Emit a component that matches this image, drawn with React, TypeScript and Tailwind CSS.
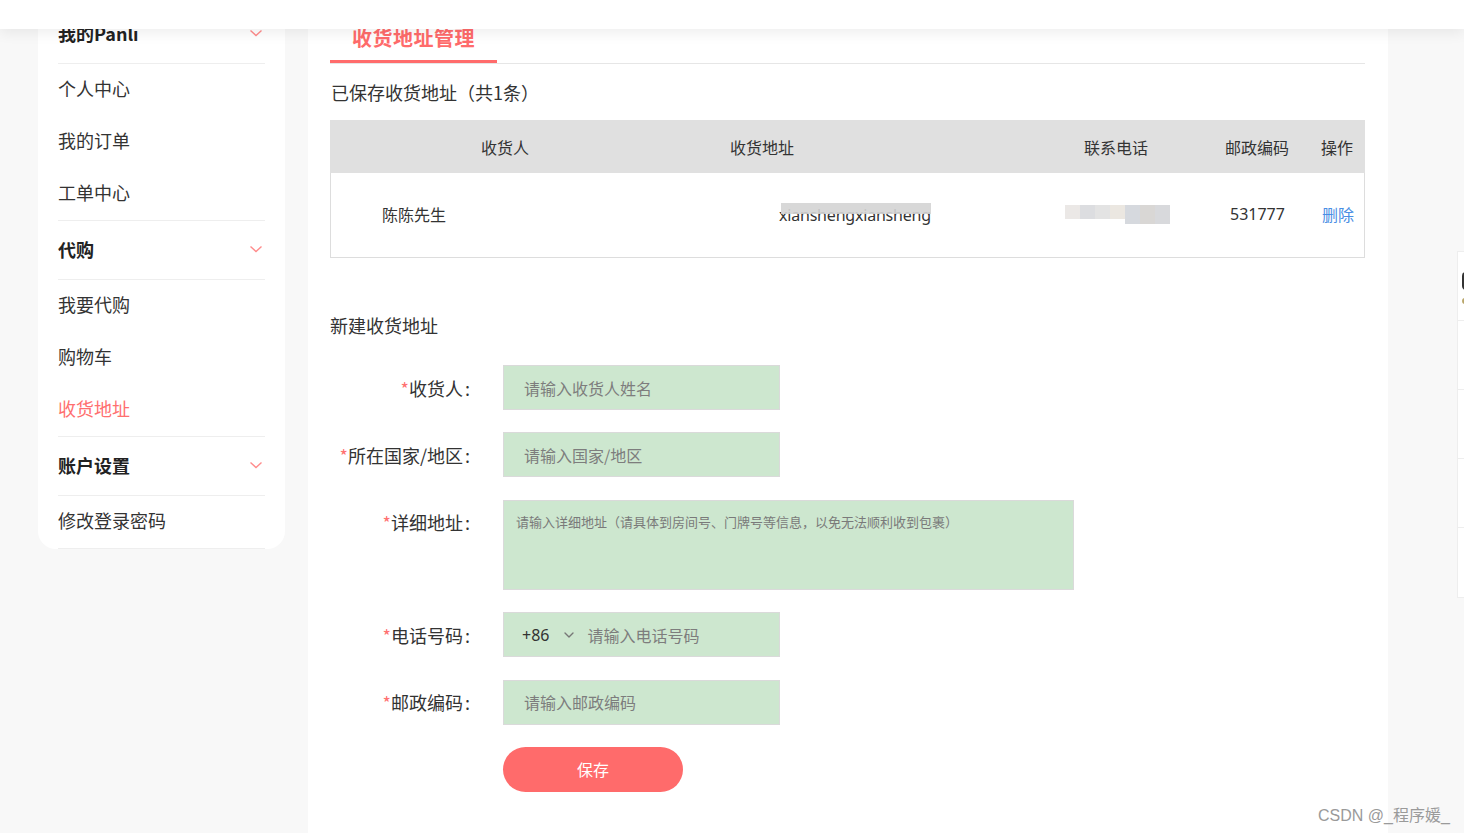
import { ChevronDown } from "lucide-react";

const font = "font-['Noto_Sans_CJK_SC','Noto_Sans',sans-serif]";

const menu = [
  { title: "我的Panli", items: ["个人中心", "我的订单", "工单中心"] },
  { title: "代购", items: ["我要代购", "购物车", "收货地址"] },
  { title: "账户设置", items: ["修改登录密码"] },
];

function Chevron({ className = "" }: { className?: string }) {
  return (
    <svg width="14" height="8" viewBox="0 0 14 8" className={className} fill="none">
      <polyline points="1.5,1.5 7,6.5 12.5,1.5" stroke="currentColor" strokeWidth="1.4" />
    </svg>
  );
}

function Sidebar() {
  return (
    <aside className="w-[247px] shrink-0 self-start rounded-b-[18px] bg-white px-5 pt-[5px]">
      {menu.map((group) => (
        <div key={group.title} className="border-b border-[#eeeeee]">
          <div className="flex h-[59px] items-center justify-between border-b border-[#eeeeee] pb-[2px] text-[18px] font-bold text-[#222]">
            <span>{group.title}</span>
            <Chevron className="mr-[2px] text-[#ff8c8c]" />
          </div>
          {group.items.map((item) => (
            <div
              key={item}
              className={`flex h-[52px] items-center pb-[3px] text-[18px] ${item === "收货地址" ? "text-[#ff6f6f]" : "text-[#333]"}`}
            >
              {item}
            </div>
          ))}
        </div>
      ))}
    </aside>
  );
}

function Field({ label, children, top = false }: { label: string; children: React.ReactNode; top?: boolean }) {
  return (
    <div className={`flex ${top ? "items-start" : "items-center"}`}>
      <div className={`w-[140px] shrink-0 text-right text-[18px] leading-[26px] text-[#333] ${top ? "pt-[9px]" : ""}`}>
        <span className="text-[#ff7070]">*</span>
        {label}
        <span className="ml-[2px]">:</span>
      </div>
      <div className="ml-[33px]">{children}</div>
    </div>
  );
}

const inputCls =
  "h-[45px] w-[277px] border border-[#dadada] bg-[#cde7cf] px-5 text-[16px] text-[#333] outline-none placeholder:text-[#7d7d7d]";

function AddressTable() {
  return (
    <div className="mt-[15px]">
      <div className="grid h-[53px] grid-cols-[290px_380px_200px_105px_60px] items-center bg-[#e0e0e0] text-[16px] text-[#333]">
        <span className="pl-[151px]">收货人</span>
        <span className="pl-[110px]">收货地址</span>
        <span className="pl-[84px]">联系电话</span>
        <span className="pl-[25px]">邮政编码</span>
        <span className="pl-[16px]">操作</span>
      </div>
      <div className="grid h-[85px] grid-cols-[290px_380px_200px_105px_60px] items-center border border-t-0 border-[#dddddd] pb-[2px] text-[16px] text-[#333]">
        <span className="pl-[51px]">陈陈先生</span>
        <span className="relative pl-[158px]">
          <span className="font-['Noto_Sans',sans-serif] text-[16px] tracking-[-0.2px]">xianshengxiansheng</span>
          <span className="absolute left-[160px] top-[1px] h-[11px] w-[150px] bg-[#d4d4d4] opacity-90" />
        </span>
        <span className="flex pl-[64px]">
          <span className="h-[14px] w-[15px] bg-[#ebe8e6]" />
          <span className="h-[14px] w-[15px] bg-[#dcdde0]" />
          <span className="h-[14px] w-[15px] bg-[#e3e3e3]" />
          <span className="h-[14px] w-[15px] bg-[#ebe7e1]" />
          <span className="h-[19px] w-[15px] bg-[#d6d9de]" />
          <span className="h-[19px] w-[15px] bg-[#d9d7d5]" />
          <span className="h-[19px] w-[15px] bg-[#d8d9dc]" />
        </span>
        <span className="pl-[29px] font-['Noto_Sans',sans-serif]">531777</span>
        <span className="pl-[16px] text-[#4a8ee4]">删除</span>
      </div>
    </div>
  );
}

function MainPanel() {
  return (
    <main className="h-full w-[1080px] shrink-0 bg-white pl-[22px] pr-[23px]">
      <div className="border-b border-[#e6e6e6]">
        <div className="inline-block w-[167px] border-b-[3px] border-[#ff6b6b] pb-[8px] pl-[22px] pt-[24px] text-[20px] font-bold leading-[28px] tracking-[0.5px] text-[#ff6b6b]">
          收货地址管理
        </div>
      </div>
      <p className="mt-[15px] pl-px text-[18px] leading-[26px] text-[#333]">已保存收货地址（共1条）</p>
      <AddressTable />

      <p className="mt-[54px] text-[18px] leading-[26px] text-[#333]">新建收货地址</p>

      <form className="mt-[27px] flex flex-col gap-[22.4px]">
        <Field label="收货人">
          <input className={inputCls} placeholder="请输入收货人姓名" />
        </Field>
        <Field label="所在国家/地区">
          <input className={inputCls} placeholder="请输入国家/地区" />
        </Field>
        <Field label="详细地址" top>
          <textarea
            className="block h-[90px] w-[571px] resize-none border border-[#dadada] bg-[#cde7cf] px-3 pt-[11px] text-[13px] leading-[20px] outline-none placeholder:text-[#7a7a7a]"
            placeholder="请输入详细地址（请具体到房间号、门牌号等信息，以免无法顺利收到包裹）"
          />
        </Field>
        <Field label="电话号码">
          <div className="flex h-[45px] w-[277px] items-center border border-[#dadada] bg-[#cde7cf] pl-[18px] text-[16px]">
            <span className="font-['Noto_Sans',sans-serif] text-[#333]">+86</span>
            <ChevronDown className="ml-[12px] h-[16px] w-[16px] text-[#777]" strokeWidth={2} />
            <input className="ml-[10px] w-[170px] bg-transparent outline-none placeholder:text-[#7d7d7d]" placeholder="请输入电话号码" />
          </div>
        </Field>
        <Field label="邮政编码">
          <input className={inputCls} placeholder="请输入邮政编码" />
        </Field>
        <div className="pl-[173px]">
          <button type="button" className="h-[45px] w-[180px] rounded-full bg-[#ff6b6b] text-[16px] text-white">
            保存
          </button>
        </div>
      </form>
    </main>
  );
}

export default function App() {
  return (
    <div className={`relative h-screen overflow-hidden bg-[#f8f8f8] ${font}`}>
      <header className="absolute inset-x-0 top-0 z-10 h-[29px] bg-white shadow-[0_4px_14px_rgba(0,0,0,0.07)]" />

      <div className="flex h-full gap-[23px] pl-[38px]">
        <Sidebar />
        <MainPanel />
      </div>

      <div className="absolute left-[1457px] top-[251px] w-[70px] border border-[#eeeeee] bg-white">
        {[0, 1, 2, 3, 4].map((i) => (
          <div key={i} className="h-[69px] border-b border-[#eeeeee] last:border-b-0">
            {i === 0 && (
              <div className="pl-[4px] pt-[20px]">
                <div className="h-[18px] w-[8px] rounded-sm bg-[#333]" />
                <div className="mt-[8px] h-[6px] w-[6px] rounded-full bg-[#b9a66a]" />
              </div>
            )}
          </div>
        ))}
      </div>

      <span className="absolute left-[1318px] top-[804px] text-[16px] text-[#9a9a9a] font-['Liberation_Sans','Noto_Sans_CJK_SC',sans-serif]">
        CSDN @_程序媛_
      </span>
    </div>
  );
}
